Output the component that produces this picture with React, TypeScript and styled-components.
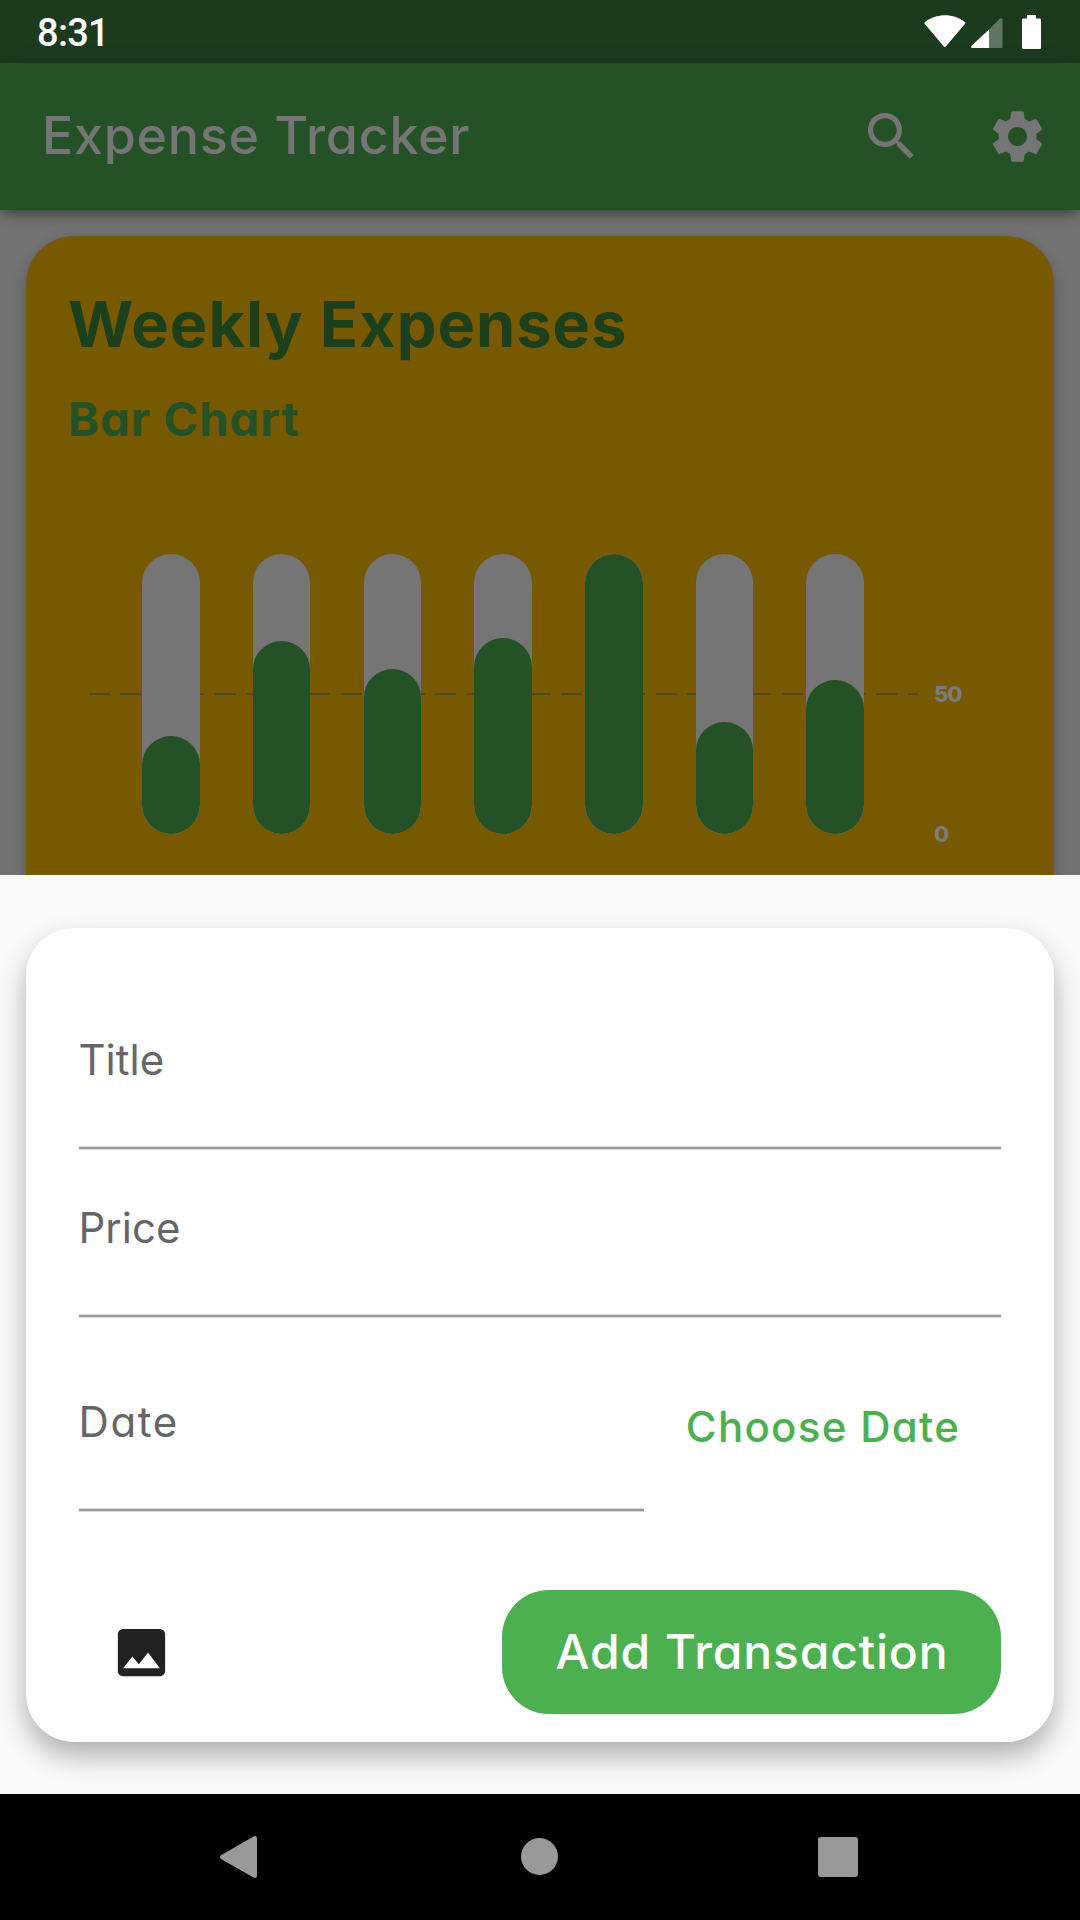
import React from "react";
import styled, { createGlobalStyle } from "styled-components";

const GlobalStyle = createGlobalStyle`
  * { box-sizing: border-box; }
  body { margin: 0; }
  button { border: 0; padding: 0; background: none; font: inherit; color: inherit; }
`;

const Screen = styled.div`
  width: 1080px;
  height: 1920px;
  display: flex;
  flex-direction: column;
  overflow: hidden;
  background: #737373;
  font-family: "Inter", "Liberation Sans", sans-serif;
  font-feature-settings: "cv11";
`;

const StatusBar = styled.div`
  height: 63px;
  flex: none;
  display: flex;
  align-items: center;
  justify-content: space-between;
  padding: 3px 39px 0 37px;
  background: #1c3a1e;
  color: #fff;
`;

const Clock = styled.span`
  font: 500 38px/60px Roboto, sans-serif;
  letter-spacing: -0.7px;
`;

const StatusIcons = styled.svg`
  display: block;
  width: 117px;
  height: 36px;
`;

const AppBar = styled.header`
  position: relative;
  z-index: 1;
  height: 147px;
  flex: none;
  display: flex;
  align-items: center;
  padding: 0 31px 0 42px;
  background: #245126;
  color: #757575;
  box-shadow: 0 5px 12px -2px rgba(0, 0, 0, 0.45), 0 3px 24px rgba(0, 0, 0, 0.08);
`;

const AppTitle = styled.h1`
  flex: 1;
  margin: 0 0 2px;
  font-size: 52px;
  font-weight: 500;
  letter-spacing: 0.7px;
  white-space: nowrap;
`;

const Actions = styled.div`
  display: flex;
  gap: 63.5px;
`;

const Icon = styled.svg`
  display: block;
  width: 63px;
  height: 63px;
  fill: currentColor;
`;

const Body = styled.main`
  height: 665px;
  flex: none;
  padding: 26px 26px 0;
  overflow: hidden;
`;

const ChartCard = styled.section`
  height: 760px;
  padding: 43px 41px 0;
  border-radius: 48px;
  background: #765900;
  box-shadow: 0 4px 14px rgba(0, 0, 0, 0.25);
`;

const CardTitle = styled.h2`
  margin: 0 0 0 1px;
  font-size: 63px;
  line-height: 90px;
  font-weight: 700;
  letter-spacing: 1.05px;
  color: #1b401b;
`;

const CardSubtitle = styled.h3`
  margin: 20px 0 105px 1px;
  font-size: 47px;
  line-height: 60px;
  font-weight: 700;
  letter-spacing: 1.1px;
  color: #245126;
`;

const Chart = styled.div`
  display: flex;
  height: 280px;
  margin-left: 22px;
`;

const Plot = styled.div`
  width: 829px;
  padding-right: 0.8px;
  display: flex;
  justify-content: space-evenly;
  background: repeating-linear-gradient(90deg, #53481b 0 21px, transparent 21px 31.5px) 0 139px / 100% 2px no-repeat;
`;

const Track = styled.div`
  width: 57.5px;
  display: flex;
  align-items: flex-end;
  border-radius: 29px;
  background: #757575;
  overflow: hidden;
`;

const Fill = styled.div`
  width: 100%;
  border-radius: 29px;
  background: #245126;
`;

const Scale = styled.div`
  display: flex;
  flex-direction: column;
  justify-content: space-between;
  height: 170px;
  margin: 125px 0 0 16px;
  font-size: 22px;
  line-height: 30px;
  font-weight: 800;
  letter-spacing: -1.2px;
  color: #7b7b7b;
`;

const Sheet = styled.section`
  height: 919px;
  flex: none;
  padding: 53px 26px 52px;
  background: #fafafa;
`;

const FormCard = styled.form`
  height: 814px;
  padding: 92px 53px 0;
  border-radius: 48px;
  background: #fff;
  box-shadow: 0 14px 28px rgba(0, 0, 0, 0.3);
`;

const Field = styled.label<{ $width?: number; $gap?: number }>`
  display: flex;
  flex: none;
  width: ${(p) => (p.$width ? `${p.$width}px` : "100%")};
  height: 130px;
  margin-bottom: ${(p) => p.$gap ?? 0}px;
  font-size: 42px;
  line-height: 80px;
  color: #666;
  background: linear-gradient(#dcdcdc 0 1px, #999 1px 3px, #dcdcdc 3px 4px) 0 100% / 100% 4px no-repeat;
`;

const FieldName = styled.span<{ $spacing: number }>`
  margin-left: -0.5px;
  letter-spacing: ${(p) => p.$spacing}px;
`;

const DateRow = styled.div`
  display: flex;
  align-items: flex-start;
`;

const TextButton = styled.button`
  flex: 1;
  font-size: 42px;
  line-height: 89px;
  font-weight: 500;
  letter-spacing: 1.3px;
  text-indent: 1px;
  white-space: nowrap;
  color: #4caf50;
`;

const Footer = styled.div`
  display: flex;
  align-items: center;
  justify-content: space-between;
  height: 124px;
  margin-top: 78px;
  padding-left: 31px;
  color: #212121;
`;

const SubmitButton = styled.button`
  width: 499px;
  height: 124px;
  padding-bottom: 2px;
  border-radius: 47px;
  background: #4caf50;
  color: #fff;
  font-size: 48px;
  font-weight: 500;
  letter-spacing: 0.85px;
  text-indent: 1px;
  white-space: nowrap;
`;

const NavBar = styled.nav`
  height: 126px;
  flex: none;
  display: flex;
  align-items: center;
  justify-content: space-between;
  padding: 0 221px 0 219px;
  background: #000;
`;

const NavIcon = styled.svg`
  display: block;
  width: 42px;
  height: 44px;
  fill: #999;
`;

const week = [35, 69, 59, 70, 100, 40, 55];

export default function App() {
  return (
    <>
      <GlobalStyle />
      <Screen>
        <StatusBar>
          <Clock>8:31</Clock>
          <StatusIcons viewBox="0 0 117 36" fill="#fff">
            <path d="M.8 7.2C12-2 30-2 41 7.2c.6.5.5 1 .1 1.6L22 31.300c-.8.9-1.600.9-2.400 0L.6 8.800C.2 8.200.2 7.700.8 7.200z" />
            <path d="M65 14.500V33H48.500c-1.500 0-1.900-1.300-1-2.200z" />
            <path d="M65 14.500L75.500 4c1.500-1.500 3-.8 3 1v26.500c0 1-.5 1.500-1.500 1.500H65z" opacity=".3" />
            <path d="M103 0h9v3.500h3.500c1 0 1.500.5 1.500 1.500v27.500c0 1-.5 1.500-1.500 1.500h-16c-1 0-1.500-.5-1.500-1.500V5c0-1 .5-1.500 1.500-1.500H103z" />
          </StatusIcons>
        </StatusBar>
        <AppBar>
          <AppTitle>Expense Tracker</AppTitle>
          <Actions>
            <Icon viewBox="0 0 24 24">
              <path d="M15.500 14h-.79l-.28-.27A6.471 6.471 0 0 0 16 9.500 6.500 6.500 0 1 0 9.500 16c1.610 0 3.090-.59 4.230-1.570l.27.28v.79l5 4.990L20.490 19l-4.990-5zm-6 0C7.010 14 5 11.990 5 9.500S7.010 5 9.500 5 14 7.010 14 9.500 11.990 14 9.500 14z" />
            </Icon>
            <Icon viewBox="0 0 24 24">
              <path d="M19.14,12.94c0.04-0.3,0.06-0.61,0.06-0.94c0-0.32-0.02-0.64-0.07-0.94l2.03-1.58c0.18-0.14,0.23-0.41,0.12-0.61l-1.92-3.32c-0.12-0.22-0.37-0.29-0.59-0.22l-2.39,0.96c-0.5-0.38-1.03-0.7-1.62-0.94L14.4,2.81c-0.04-0.24-0.24-0.41-0.48-0.41h-3.84c-0.24,0-0.43,0.17-0.47,0.41L9.25,5.35C8.66,5.59,8.12,5.92,7.63,6.29L5.24,5.33c-0.22-0.08-0.47,0-0.59,0.22L2.74,8.87C2.62,9.08,2.66,9.34,2.86,9.48l2.03,1.58C4.84,11.36,4.8,11.69,4.8,12s0.02,0.64,0.07,0.94l-2.03,1.58c-0.18,0.14-0.23,0.41-0.12,0.61l1.92,3.32c0.12,0.22,0.37,0.29,0.59,0.22l2.39-0.96c0.5,0.38,1.03,0.7,1.62,0.94l0.36,2.54c0.05,0.24,0.24,0.41,0.48,0.41h3.84c0.24,0,0.44-0.17,0.47-0.41l0.36-2.54c0.59-0.24,1.13-0.56,1.62-0.94l2.39,0.96c0.22,0.08,0.47,0,0.59-0.22l1.92-3.32c0.12-0.22,0.07-0.47-0.12-0.61L19.14,12.94z M12,15.6c-1.98,0-3.6-1.62-3.6-3.6s1.62-3.6,3.6-3.6s3.6,1.62,3.6,3.6S13.98,15.6,12,15.6z" />
            </Icon>
          </Actions>
        </AppBar>
        <Body>
          <ChartCard>
            <CardTitle>Weekly Expenses</CardTitle>
            <CardSubtitle>Bar Chart</CardSubtitle>
            <Chart>
              <Plot>
                {week.map((value, i) => (
                  <Track key={i}>
                    <Fill style={{ height: `${value}%` }} />
                  </Track>
                ))}
              </Plot>
              <Scale>
                <span>50</span>
                <span>0</span>
              </Scale>
            </Chart>
          </ChartCard>
        </Body>
        <Sheet>
          <FormCard>
            <Field $gap={38}>
              <FieldName $spacing={0}>Title</FieldName>
            </Field>
            <Field $gap={64}>
              <FieldName $spacing={0}>Price</FieldName>
            </Field>
            <DateRow>
              <Field $width={565}>
                <FieldName $spacing={1.6}>Date</FieldName>
              </Field>
              <TextButton type="button">Choose Date</TextButton>
            </DateRow>
            <Footer>
              <Icon viewBox="0 0 24 24">
                <path d="M21 19V5c0-1.100-.9-2-2-2H5c-1.100 0-2 .9-2 2v14c0 1.100.9 2 2 2h14c1.100 0 2-.9 2-2zM8.500 13.500l2.500 3.010L14.500 12l4.500 6H5l3.500-4.500z" />
              </Icon>
              <SubmitButton type="button">Add Transaction</SubmitButton>
            </Footer>
          </FormCard>
        </Sheet>
        <NavBar>
          <NavIcon viewBox="0 0 42 44">
            <path d="M2 20.300L34.500 1.600c2-1.100 3.500-.3 3.500 2v37c0 2.200-1.500 3-3.500 1.900L2 23.900c-1.500-.9-1.500-2.700 0-3.600z" />
          </NavIcon>
          <NavIcon viewBox="0 0 42 44">
            <circle cx="21.500" cy="21.500" r="18.500" />
          </NavIcon>
          <NavIcon viewBox="0 0 42 44">
            <rect x="1" y="2" width="40" height="40" rx="3" />
          </NavIcon>
        </NavBar>
      </Screen>
    </>
  );
}
